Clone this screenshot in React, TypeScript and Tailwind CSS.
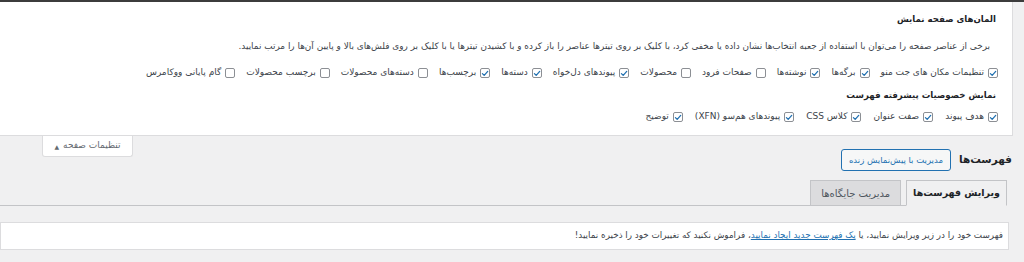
import React from 'react';

type Option = { label: string; checked: boolean };

const ELEMENTS: Option[] = [
  { label: 'تنظیمات مکان های جت منو', checked: true },
  { label: 'برگه‌ها', checked: true },
  { label: 'نوشته‌ها', checked: true },
  { label: 'صفحات فرود', checked: false },
  { label: 'محصولات', checked: false },
  { label: 'پیوندهای دل‌خواه', checked: true },
  { label: 'دسته‌ها', checked: true },
  { label: 'برچسب‌ها', checked: true },
  { label: 'دسته‌های محصولات', checked: false },
  { label: 'برچسب محصولات', checked: false },
  { label: 'گام پایانی ووکامرس', checked: false },
];

const ADVANCED: Option[] = [
  { label: 'هدف پیوند', checked: true },
  { label: 'صفت عنوان', checked: true },
  { label: 'کلاس CSS', checked: true },
  { label: 'پیوندهای هم‌سو (XFN)', checked: true },
  { label: 'توضیح', checked: true },
];

const Checkbox: React.FC<{ checked: boolean }> = ({ checked }) => (
  <span className="w-[10px] h-[10px] border border-[#8c8f94] rounded-[2px] bg-white flex items-center justify-center shrink-0">
    {checked && (
      <svg width="9" height="9" viewBox="0 0 10 10" fill="none">
        <path d="M1.8 5.2 L4 7.4 L8.4 2.4" stroke="#2271b1" strokeWidth="1.6" strokeLinecap="round" strokeLinejoin="round" />
      </svg>
    )}
  </span>
);

const OptionRow: React.FC<{ options: Option[]; wide?: boolean }> = ({ options, wide }) => (
  <div className={`flex items-center h-[20px] text-[9px] ${wide ? 'gap-x-[12px]' : 'gap-x-[11px]'}`}>
    {options.map(opt => (
      <label key={opt.label} className="flex items-center gap-[4px] whitespace-nowrap">
        <Checkbox checked={opt.checked} />
        <span>{opt.label}</span>
      </label>
    ))}
  </div>
);

const App: React.FC = () => {
  return (
    <div
      dir="rtl"
      className="w-[1024px] h-[262px] overflow-hidden bg-[#f0f0f1] text-[#3c434a] text-[10px] font-['DejaVu_Sans',sans-serif]"
    >
      <div className="h-[2px] bg-[#3c3c3c]" />

      {/* Screen options panel */}
      <div className="mr-[11px] bg-white border-r border-b border-[#dcdcde] pr-[14px] pt-[10px] h-[134px]">
        <h5 className="text-[8.6px] font-bold text-[#1d2327] h-[14px] leading-[14px] mr-[2px]">المان‌های صفحه نمایش</h5>
        <p className="mt-[13px] mr-[8px] leading-[14px] whitespace-nowrap text-[8.9px]">
          برخی از عناصر صفحه را می‌توان با استفاده از جعبه انتخاب‌ها نشان داده یا مخفی کرد، با کلیک بر روی تیترها عناصر را باز کرده و با کشیدن تیترها یا با کلیک بر روی فلش‌های بالا و پایین آن‌ها را مرتب نمایید.
        </p>
        <div className="mt-[10px]">
          <OptionRow options={ELEMENTS} />
        </div>
        <h5 className="mt-[4px] mr-[2px] text-[8.6px] font-bold text-[#1d2327] h-[16px] leading-[16px]">نمایش خصوصیات پیشرفته فهرست</h5>
        <div className="mt-[4px]">
          <OptionRow options={ADVANCED} wide />
        </div>
      </div>

      {/* Screen options toggle tab */}
      <div className="flex justify-end">
        <div className="ml-[42px] w-[91px] h-[21px] bg-white border border-t-0 border-[#dcdcde] rounded-b-[3px] flex items-center justify-center gap-[4px] text-[9px] text-[#646970]">
          <span>تنظیمات صفحه</span>
          <span className="text-[6px]">▲</span>
        </div>
      </div>

      {/* Heading */}
      <div className="mr-[12px] mt-[-8px] flex items-center gap-[8px] h-[22px]">
        <h1 className="text-[10.5px] font-bold text-[#1d2327]">فهرست‌ها</h1>
        <button className="h-[22px] px-[7px] border border-[#2271b1] rounded-[3px] bg-[#f6f7f7] text-[#2271b1] text-[8.5px]">
          مدیریت با پیش‌نمایش زنده
        </button>
      </div>

      {/* Nav tabs */}
      <div className="mr-[17px] mt-[9px] flex items-end gap-[5px] h-[26px] border-b border-[#c3c4c7]">
        <div className="h-[26px] px-[6px] mb-[-1px] bg-[#f0f0f1] border border-[#c3c4c7] border-b-[#f0f0f1] flex items-center text-[9.5px] font-bold text-[#1d2327]">
          ویرایش فهرست‌ها
        </div>
        <div className="h-[25px] px-[10px] bg-[#dcdcde] border border-b-0 border-[#c3c4c7] flex items-center text-[10px] text-[#50575e]">
          مدیریت جایگاه‌ها
        </div>
      </div>

      {/* Notice */}
      <div className="mr-[15px] mt-[16px] h-[28px] bg-white border border-[#dcdcde] flex items-center pr-[5px] text-[8.8px] text-[#3c434a]">
        <span>
          فهرست خود را در زیر ویرایش نمایید، یا{' '}
          <a href="#" className="text-[#2271b1] underline">یک فهرست جدید ایجاد نمایید</a>
          ، فراموش نکنید که تغییرات خود را ذخیره نمایید!
        </span>
      </div>
    </div>
  );
};

export default App;
